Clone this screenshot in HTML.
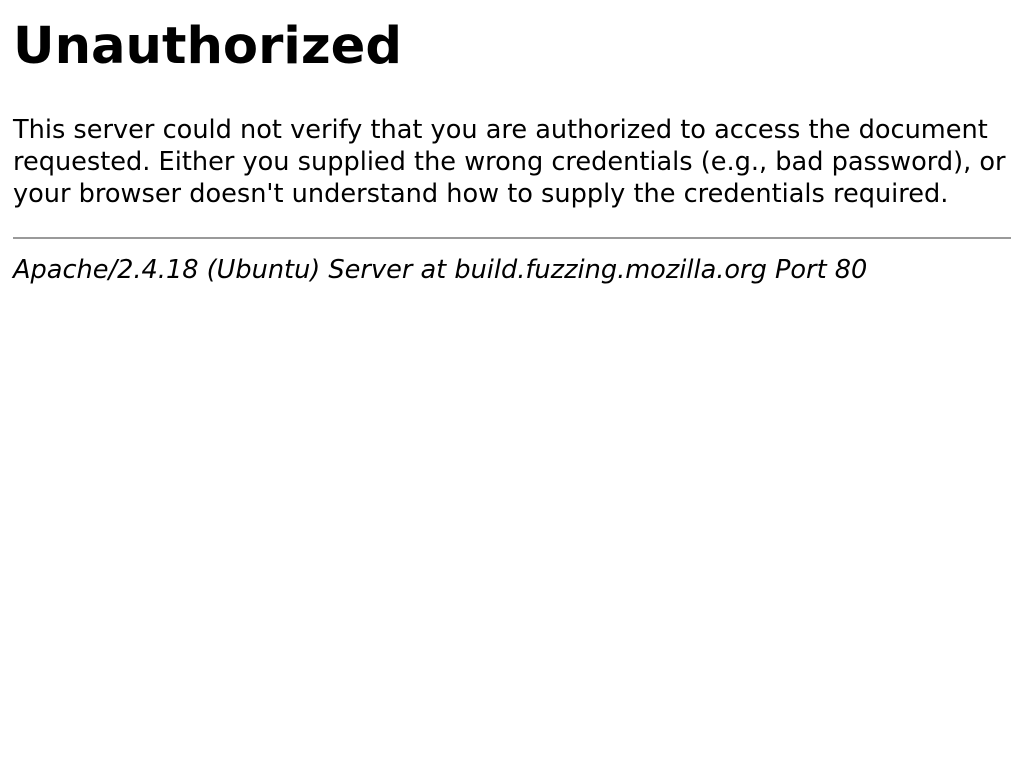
<!DOCTYPE html>
<html><head><style>
body{margin:0;background:#fff;color:#000;font-family:"DejaVu Sans","Liberation Sans",sans-serif;}
.a{position:absolute;left:13px;white-space:nowrap;}
h1{margin:0;font-size:51.2px;line-height:60px;font-weight:bold;top:16px;}
p{margin:0;font-size:25.6px;line-height:32px;top:114px;}
.hr{position:absolute;left:13px;width:998px;top:237px;height:2px;background:#9a9a9a;}
address{font-size:25.6px;line-height:32px;font-style:italic;top:254px;}
</style></head><body>
<h1 class="a">Unauthorized</h1>
<p class="a">This server could not verify that you are authorized to access the document<br>requested.  Either you supplied the wrong credentials (e.g., bad password), or<br>your browser doesn't understand how to supply the credentials required.</p>
<div class="hr"></div>
<address class="a">Apache/2.4.18 (Ubuntu) Server at build.fuzzing.mozilla.org Port 80</address>
</body></html>
